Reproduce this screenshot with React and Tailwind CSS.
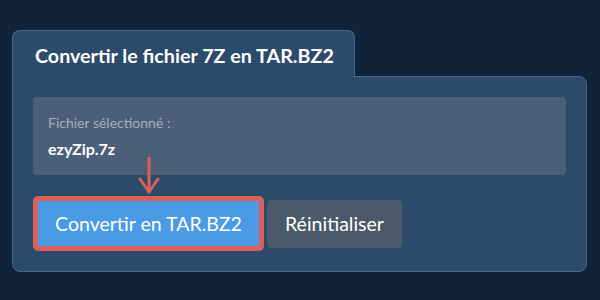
import React from "react";

export default function App() {
  return (
    <div className="w-[600px] h-[300px] bg-[#112339] pt-[30px] px-[12px] font-['Lato',sans-serif]">
      {/* Tab */}
      <div className="relative z-10 -mb-px w-[343px] h-[47px] bg-[#2c4a6a] border border-b-0 border-[#4f6888] rounded-t-[8px] pl-[22px] pt-[13px]">
        <h1 className="text-[19.7px] leading-[24px] font-bold text-white">Convertir le fichier 7Z en TAR.BZ2</h1>
      </div>

      {/* Panel */}
      <div className="w-[575px] bg-[#2c4a6a] border border-[#4f6888] rounded-b-[8px] rounded-tr-[8px] p-[20px]">
        <div className="h-[78px] bg-[#4b6078] rounded-[4px] pl-[15px] pt-[17px]">
          <p className="text-[14px] leading-[17px] text-[#a3b0bf]">Fichier sélectionné :</p>
          <p className="mt-[8px] text-[16px] leading-[19px] font-bold text-white">ezyZip.7z</p>
        </div>

        <div className="relative mt-[21px] flex items-center">
          {/* Arrow pointer */}
          <svg className="absolute left-[105px] top-[-39px]" width="22" height="38" viewBox="0 0 22 38" fill="none">
            <path d="M11 1 L11 35" stroke="#dc605a" strokeWidth="3" strokeLinecap="round" />
            <path d="M2 22 L11 35 L20 22" stroke="#dc605a" strokeWidth="3" strokeLinecap="round" strokeLinejoin="round" />
          </svg>

          <div className="border-[5px] border-[#dc605a] rounded-[5px]">
            <button className="w-[221px] h-[45px] bg-[#4a9ae6] text-white text-[19.5px] block">
              Convertir en TAR.BZ2
            </button>
          </div>
          <button className="ml-[3px] w-[135px] h-[48px] bg-[#4b5a6a] rounded-[4px] text-white text-[19.5px]">
            Réinitialiser
          </button>
        </div>
      </div>
    </div>
  );
}
